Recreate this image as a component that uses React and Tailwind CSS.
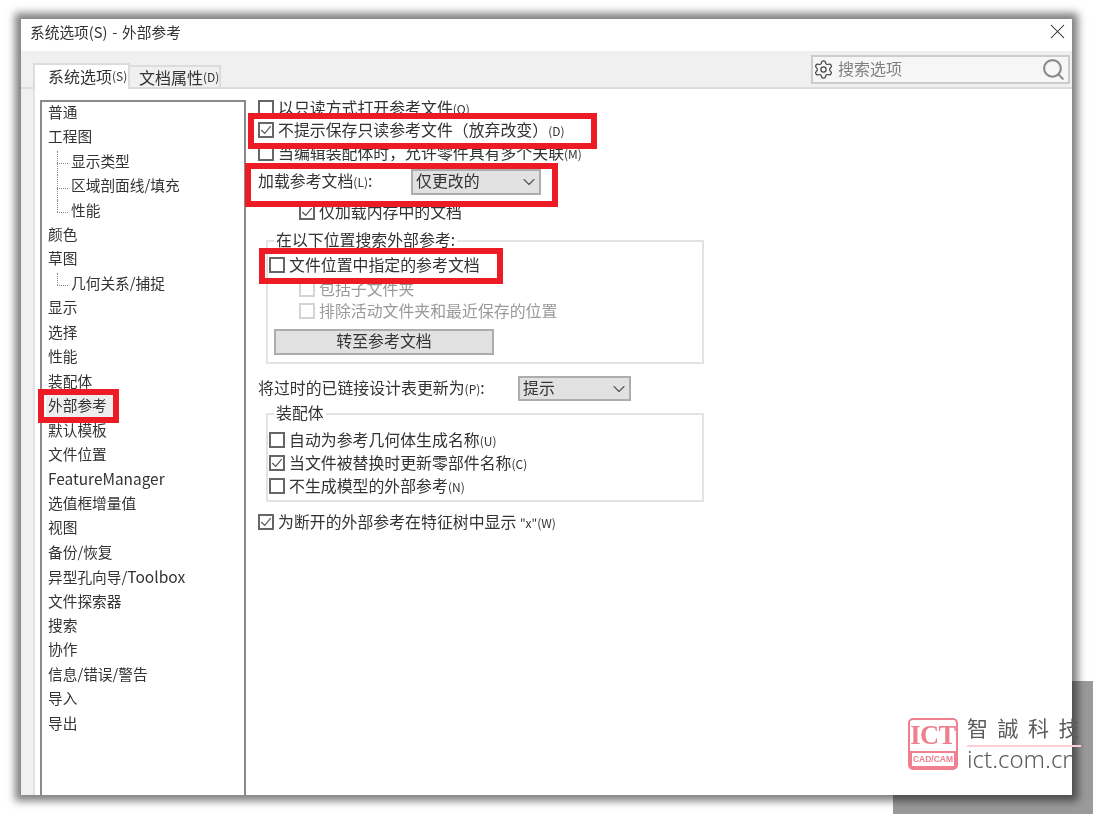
import { ChevronDown, Settings, Search, X } from "lucide-react";

const treeItems = [
  { label: "普通" },
  { label: "工程图" },
  { label: "显示类型", child: true, line: "mid" },
  { label: "区域剖面线/填充", child: true, line: "mid" },
  { label: "性能", child: true, line: "end" },
  { label: "颜色" },
  { label: "草图" },
  { label: "几何关系/捕捉", child: true, line: "end" },
  { label: "显示" },
  { label: "选择" },
  { label: "性能" },
  { label: "装配体" },
  { label: "外部参考", selected: true },
  { label: "默认模板" },
  { label: "文件位置" },
  { label: <span className="text-[15.4px]">FeatureManager</span> },
  { label: "选值框增量值" },
  { label: "视图" },
  { label: "备份/恢复" },
  { label: <>异型孔向导/<span className="text-[15.6px]">Toolbox</span></> },
  { label: "文件探索器" },
  { label: "搜索" },
  { label: "协作" },
  { label: "信息/错误/警告" },
  { label: "导入" },
  { label: "导出" },
];

function Check({ checked, disabled }) {
  return (
    <span
      className={`flex h-[16px] w-[16px] shrink-0 items-center justify-center border-2 bg-white ${
        disabled ? "border-[#d4d4d4]" : "border-[#666666]"
      }`}
    >
      {checked && (
        <svg width="14" height="14" viewBox="0 0 14 14" fill="none">
          <path d="M1.5 7 L5.5 11 L12.5 2.5" stroke="#555555" strokeWidth="1.4" />
        </svg>
      )}
    </span>
  );
}

function Key({ children }) {
  return <span className="text-[12px]">{children}</span>;
}

function Row({ className = "", checked, disabled, children }) {
  return (
    <div className={`flex h-[22px] shrink-0 items-center gap-[4px] ${className}`}>
      <Check checked={checked} disabled={disabled} />
      <span className={`whitespace-nowrap pb-[1px] ${disabled ? "text-[#9a9a9a]" : ""}`}>{children}</span>
    </div>
  );
}

function Dropdown({ width, height, value }) {
  return (
    <div
      className={`flex items-center justify-between border-2 border-[#adadad] bg-[#e1e1e1] pl-[3px] ${width} ${height}`}
    >
      <span className="pb-[2px]">{value}</span>
      <ChevronDown size={20} strokeWidth={1.3} color="#555555" />
    </div>
  );
}

function RedBox({ className }) {
  return <div className={`absolute border-[6px] border-[#ed1c24] ${className}`} />;
}

function Logo() {
  return (
    <div className="absolute left-[908px] top-[717px] flex items-center gap-[9px]">
      <div className="flex h-[52px] w-[50px] flex-col rounded-[5px] border-2 border-[#f0808f] bg-white">
        <div className="flex h-[31px] items-center justify-center font-['Liberation_Serif',serif] text-[26.5px] font-bold leading-none tracking-[-0.5px] text-[#ee7f8e]">
          ICT
        </div>
        <div className="flex flex-1 items-center justify-center bg-[#f0808f] p-[2px]">
          <div className="flex h-full w-full items-center justify-center whitespace-nowrap bg-white font-['Liberation_Sans',sans-serif] text-[8.5px] font-bold leading-none text-[#ee7f8e]">
            CAD/CAM
          </div>
        </div>
      </div>
      <div className="flex w-[114px] flex-col items-start">
        <div className="h-[28px] whitespace-nowrap font-['Noto_Sans_CJK_TC',sans-serif] text-[21px] leading-[20px] tracking-[9.5px] text-[#5c5c5c]">
          智誠科技
        </div>
        <div className="h-[2px] w-full bg-[#fbcfd4]" />
        <div className="whitespace-nowrap font-['Noto_Sans',sans-serif] text-[24px] font-light leading-[24px] text-[#5c5c5c]">
          ict.com.cn
        </div>
      </div>
    </div>
  );
}

export default function App() {
  return (
    <div className="relative h-[814px] w-[1093px] overflow-hidden bg-white pl-[21px] pt-[19px] font-['Noto_Sans_CJK_SC','Noto_Sans',sans-serif] leading-none text-[#333333] blur-[0.5px]">
      <div className="absolute left-[893px] top-[681px] h-[133px] w-[200px] bg-[#9a9a9a]" />

      <div className="relative flex h-[776px] w-[1051px] flex-col bg-white shadow-[0_0_8px_6px_rgba(0,0,0,0.5)]">
        {/* title bar */}
        <div className="flex h-[32px] shrink-0 items-center justify-between pb-[6px] pl-[9px] pr-[2px] text-[14.7px] [word-spacing:1.5px]">
          <span>系统选项(S) - 外部参考</span>
          <X size={25} strokeWidth={1} color="#222222" className="-mt-[2px]" />
        </div>

        {/* tab strip */}
        <div className="flex h-[38px] shrink-0 items-end justify-between border-b-2 border-[#dcdcdc] bg-[#f0f0f0] pl-[12px] pr-[2px]">
          <div className="flex items-end">
            <div className="-mb-[2px] flex h-[26px] w-[97px] items-center border-2 border-b-0 border-[#dcdcdc] bg-white pb-[2px] pl-[13px] text-[16px]">
              系统选项<Key>(S)</Key>
            </div>
            <div className="flex h-[22px] w-[91px] items-center whitespace-nowrap border-2 border-b-0 border-l-0 border-[#dcdcdc] pl-[9px] text-[16px]">
              文档属性<Key>(D)</Key>
            </div>
          </div>
          <div className="mb-[3px] flex h-[29px] w-[259px] items-center justify-between border-2 border-[#cccccc] bg-[#f6f6f6] pr-[2px] text-[#808080]">
            <div className="flex items-center gap-[4px] text-[16px]">
              <Settings size={21} strokeWidth={1.4} color="#444444" />
              <span className="pb-[3px]">搜索选项</span>
            </div>
            <Search size={25} strokeWidth={2} color="#8a8a8a" />
          </div>
        </div>

        {/* body */}
        <div className="flex min-h-0 flex-1">
          <div className="w-[12px] shrink-0 bg-[#f0f0f0]" />
          <div className="w-[2px] shrink-0 bg-[#e2e2e2]" />
          <div className="flex min-w-0 flex-1 pl-[5px] pt-[11px]">
            <div className="h-full w-[206px] shrink-0 border-2 border-b-0 border-[#8a8a8a] text-[14.7px]">
              {treeItems.map((item, i) => (
                <div
                  key={i}
                  className={`relative flex h-[24.45px] items-center whitespace-nowrap ${
                    item.child ? "pl-[29px]" : "pl-[6px]"
                  }`}
                >
                  {item.child && (
                    <>
                      <span
                        className={`absolute left-[15px] top-0 w-0 border-l border-dotted border-[#888888] ${
                          item.line === "end" ? "h-1/2" : "h-full"
                        }`}
                      />
                      <span className="absolute left-[15px] top-1/2 w-[11px] border-t border-dotted border-[#888888]" />
                    </>
                  )}
                  {item.selected ? (
                    <span className="-ml-[2px] flex h-full items-center bg-[#eeeeee] pb-[4px] pl-[2px] pr-[7px]">{item.label}</span>
                  ) : (
                    <span className="pb-[4px]">{item.label}</span>
                  )}
                </div>
              ))}
            </div>

            {/* options */}
            <div className="-mt-[3px] flex flex-col pl-[12px] text-[15.9px]">
              <Row>
                以只读方式打开参考文件<Key>(O)</Key>
              </Row>
              <Row checked>
                不提示保存只读参考文件（放弃改变）<Key>(D)</Key>
              </Row>
              <Row className="mt-[1px]">
                当编辑装配体时，允许零件具有多个关联<Key>(M)</Key>
              </Row>

              <div className="mt-[5px] flex h-[26px] shrink-0 items-center">
                <span className="w-[153px] whitespace-nowrap pb-[2px]">
                  加载参考文档<Key>(L)</Key>:
                </span>
                <Dropdown width="w-[130px]" height="h-[26px]" value="仅更改的" />
              </div>

              <Row checked className="ml-[41px] mt-[6px]">
                仅加载内存中的文档
              </Row>

              <div className="relative ml-[8px] mt-[17px] flex h-[124px] w-[438px] shrink-0 flex-col border-2 border-[#e3e3e3] pl-[1px] pt-[12px]">
                <span className="absolute -top-[11px] left-[6px] whitespace-nowrap bg-white px-[2px] leading-[18px]">
                  在以下位置搜索外部参考:
                </span>
                <Row>文件位置中指定的参考文档</Row>
                <Row disabled className="ml-[30px] mt-[2px]">
                  包括子文件夹
                </Row>
                <Row disabled className="ml-[30px]">
                  排除活动文件夹和最近保存的位置
                </Row>
                <div className="ml-[5px] mt-[7px] flex h-[26px] w-[220px] shrink-0 items-center justify-center border-2 border-[#adadad] bg-[#e1e1e1] pb-[2px]">
                  转至参考文档
                </div>
              </div>

              <div className="mt-[12px] flex h-[25px] shrink-0 items-center">
                <span className="w-[260px] whitespace-nowrap pb-[2px]">
                  将过时的已链接设计表更新为<Key>(P)</Key>:
                </span>
                <Dropdown width="w-[113px]" height="h-[25px]" value="提示" />
              </div>

              <div className="relative ml-[8px] mt-[12px] flex h-[89px] w-[438px] shrink-0 flex-col border-2 border-[#e3e3e3] pl-[1px] pt-[14px]">
                <span className="absolute -top-[11px] left-[6px] whitespace-nowrap bg-white px-[2px] leading-[18px]">
                  装配体
                </span>
                <Row>
                  自动为参考几何体生成名称<Key>(U)</Key>
                </Row>
                <Row checked className="mt-[1px]">
                  当文件被替换时更新零部件名称<Key>(C)</Key>
                </Row>
                <Row className="mt-[1px]">
                  不生成模型的外部参考<Key>(N)</Key>
                </Row>
              </div>

              <Row checked className="mt-[9px]">
                为断开的外部参考在特征树中显示 <Key>"x"(W)</Key>
              </Row>
            </div>
          </div>
        </div>
      </div>

      <RedBox className="left-[248px] top-[113px] h-[36px] w-[349px]" />
      <RedBox className="left-[245px] top-[163px] h-[44px] w-[313px]" />
      <RedBox className="left-[259px] top-[248px] h-[36px] w-[244px]" />
      <RedBox className="left-[38px] top-[389px] h-[34px] w-[81px]" />
      <Logo />
    </div>
  );
}
